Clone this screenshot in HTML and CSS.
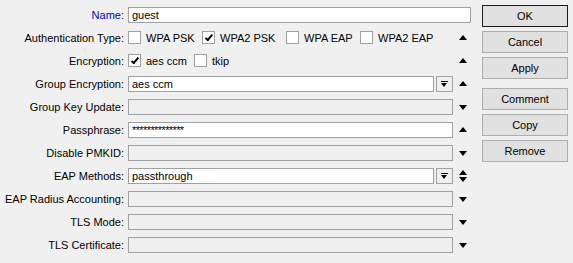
FILE: index.html
```html
<!DOCTYPE html>
<html lang="en">
<head>
    <meta charset="UTF-8">
    <title>Security Profile</title>
    <link rel="stylesheet" href="styles.css">
</head>
<body>
    <div class="window">
        <div class="form">
            <div class="row">
                <label class="lbl lbl-blue">Name:</label>
                <div class="field field-wide">guest</div>
            </div>
            <div class="row">
                <label class="lbl">Authentication Type:</label>
                <div class="checks">
                    <span class="chk w74"><span class="box"></span>WPA PSK</span>
                    <span class="chk w84"><span class="box on"></span>WPA2 PSK</span>
                    <span class="chk w74"><span class="box"></span>WPA EAP</span>
                    <span class="chk"><span class="box"></span>WPA2 EAP</span>
                </div>
                <span class="arrow up"></span>
            </div>
            <div class="row">
                <label class="lbl">Encryption:</label>
                <div class="checks">
                    <span class="chk w66"><span class="box on"></span>aes ccm</span>
                    <span class="chk"><span class="box"></span>tkip</span>
                </div>
                <span class="arrow up"></span>
            </div>
            <div class="row">
                <label class="lbl">Group Encryption:</label>
                <div class="combo">
                    <div class="field">aes ccm</div>
                    <span class="drop"></span>
                </div>
                <span class="arrow up"></span>
            </div>
            <div class="row">
                <label class="lbl">Group Key Update:</label>
                <div class="field off"></div>
                <span class="arrow down"></span>
            </div>
            <div class="row">
                <label class="lbl">Passphrase:</label>
                <div class="field pass">**************</div>
                <span class="arrow up"></span>
            </div>
            <div class="row">
                <label class="lbl">Disable PMKID:</label>
                <div class="field off"></div>
                <span class="arrow down"></span>
            </div>
            <div class="row">
                <label class="lbl">EAP Methods:</label>
                <div class="combo">
                    <div class="field">passthrough</div>
                    <span class="drop"></span>
                </div>
                <span class="arrow both"><span class="arrow up"></span><span class="arrow down"></span></span>
            </div>
            <div class="row">
                <label class="lbl">EAP Radius Accounting:</label>
                <div class="field off"></div>
                <span class="arrow down"></span>
            </div>
            <div class="row">
                <label class="lbl">TLS Mode:</label>
                <div class="field off"></div>
                <span class="arrow down"></span>
            </div>
            <div class="row">
                <label class="lbl">TLS Certificate:</label>
                <div class="field off"></div>
                <span class="arrow down"></span>
            </div>
        </div>
        <div class="buttons">
            <button class="btn default">OK</button>
            <button class="btn">Cancel</button>
            <button class="btn">Apply</button>
            <button class="btn gap">Comment</button>
            <button class="btn">Copy</button>
            <button class="btn">Remove</button>
        </div>
    </div>
</body>
</html>
```

FILE: styles.css
```css
body {
    margin: 0;
    background-color: #f0f0f0;
    font-family: "Liberation Sans", Arial, sans-serif;
    font-size: 11px;
    color: #000;
}
.window {
    display: flex;
    padding-top: 3px;
}
.form {
    width: 473px;
}
.row {
    display: flex;
    align-items: center;
    height: 23px;
}
.lbl {
    width: 125px;
    margin-right: 3px;
    flex: none;
    text-align: right;
    padding-right: 1px;
    box-sizing: border-box;
    white-space: nowrap;
}
.lbl-blue {
    color: #0000cc;
}
.field {
    box-sizing: border-box;
    width: 325px;
    height: 16px;
    border: 1px solid #a0a0a0;
    background-color: #fff;
    padding: 0 3px;
    line-height: 14px;
    flex: none;
}
.field-wide {
    width: 343px;
}
.field.off {
    background-color: #f0f0f0;
}
.field.pass {
    letter-spacing: -0.6px;
}
.combo {
    display: flex;
    gap: 2px;
    width: 325px;
    flex: none;
}
.combo .field {
    width: 306px;
}
.drop {
    width: 17px;
    height: 16px;
    box-sizing: border-box;
    border: 1px solid #a0a0a0;
    position: relative;
}
.drop::before {
    content: "";
    position: absolute;
    left: 4px;
    top: 4px;
    width: 7px;
    height: 1px;
    background: #000;
}
.drop::after {
    content: "";
    position: absolute;
    left: 4px;
    top: 6px;
    border-left: 3.5px solid transparent;
    border-right: 3.5px solid transparent;
    border-top: 4px solid #000;
}
.checks {
    display: flex;
    width: 325px;
    flex: none;
}
.chk {
    display: flex;
    align-items: center;
    white-space: nowrap;
    flex: none;
}
.w66 { width: 66px; }
.w74 { width: 74px; }
.w84 { width: 84px; }
.box {
    width: 13px;
    height: 13px;
    box-sizing: border-box;
    border: 1px solid #a0a0a0;
    background-color: #fff;
    margin-right: 5px;
    position: relative;
    flex: none;
}
.box.on::after {
    content: "";
    position: absolute;
    left: 4px;
    top: 1px;
    width: 2px;
    height: 6px;
    border: solid #000;
    border-width: 0 2px 2px 0;
    transform: rotate(40deg);
}
.arrow {
    width: 20px;
    height: 23px;
    flex: none;
    position: relative;
}
.arrow.up::after,
.arrow.down::after {
    content: "";
    position: absolute;
    left: 6px;
    border-left: 4.5px solid transparent;
    border-right: 4.5px solid transparent;
}
.arrow.up::after {
    top: 9px;
    border-bottom: 5px solid #000;
}
.arrow.down::after {
    top: 10px;
    border-top: 5px solid #000;
}
.arrow.both .arrow {
    position: absolute;
    left: 0;
    top: 0;
}
.arrow.both .up::after {
    top: 6px;
}
.arrow.both .down::after {
    top: 13px;
}
.buttons {
    margin-left: 9px;
    display: flex;
    flex-direction: column;
    gap: 4px;
    padding-top: 2px;
}
.btn {
    width: 86px;
    height: 22px;
    border: 1px solid #adadad;
    background-color: #e1e1e1;
    font-family: "Liberation Sans", Arial, sans-serif;
    font-size: 11px;
    color: #000;
    padding: 0;
}
.btn.default {
    border-color: #1a1a1a;
}
.btn.gap {
    margin-top: 5px;
}
```
